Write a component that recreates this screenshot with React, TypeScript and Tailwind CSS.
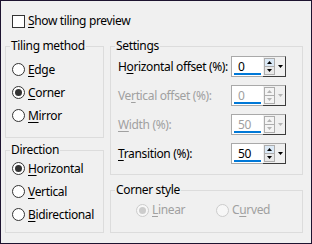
import React from "react";

function Mn({ children }: { children: React.ReactNode }) {
  return <span className="underline underline-offset-[2px] decoration-[1px]">{children}</span>;
}

function Radio({ checked, disabled, children }: { checked?: boolean; disabled?: boolean; children: React.ReactNode }) {
  return (
    <div className="flex items-center gap-[3px] whitespace-nowrap">
      <span
        className={`w-[13px] h-[13px] rounded-full border flex items-center justify-center shrink-0 ${
          disabled ? "border-[#cccccc] bg-[#f7f7f7]" : "border-[#333333] bg-white"
        }`}
      >
        {checked && <span className={`w-[7px] h-[7px] rounded-full ${disabled ? "bg-[#cccccc]" : "bg-[#333333]"}`} />}
      </span>
      <span className={disabled ? "text-[#a0a0a0]" : "text-black"}>{children}</span>
    </div>
  );
}

// legend sits at the fieldset's content edge, so padding goes on the inner box
function Group({ title, className, children }: { title: string; className: string; children: React.ReactNode }) {
  return (
    <fieldset className={`min-w-0 border border-[#dcdcdc] ${className}`}>
      <legend className="ml-[4px] px-[1px] leading-[14px] whitespace-nowrap">{title}</legend>
      {children}
    </fieldset>
  );
}

function Spin({ value, disabled }: { value: string; disabled?: boolean }) {
  const ink = disabled ? "#b4b4b4" : "#000000";
  return (
    <div className="flex h-[21px] w-[55px] shrink-0">
      <div className="relative w-[32px] h-full bg-white border border-[#a9a9a9] border-r-0">
        <span className={`absolute left-[6px] top-[2px] leading-[15px] ${disabled ? "text-[#a0a0a0]" : "text-black"}`}>{value}</span>
        <span className="absolute left-[2px] right-[2px] bottom-[1px] h-[2px] bg-[#0078d7]" />
      </div>
      <div className="flex items-center h-full border border-[#a9a9a9] border-l-0 border-r-[#3c3c3c] border-b-[#3c3c3c] bg-[#f0f0f0] pl-[1px]">
        <div className="flex flex-col w-[11px] h-[17px] border border-[#adadad]">
          <div className={`flex-1 flex items-center justify-center ${disabled ? "bg-[#f4f4f4]" : "bg-[#dbe9f6]"} border-b border-[#adadad]`}>
            <svg width="5" height="3" viewBox="0 0 5 3">
              <path d="M0 3 L2.5 0 L5 3 Z" fill={ink} />
            </svg>
          </div>
          <div className={`flex-1 flex items-center justify-center ${disabled ? "bg-[#f4f4f4]" : "bg-[#e8e8e8]"}`}>
            <svg width="5" height="3" viewBox="0 0 5 3">
              <path d="M0 0 L2.5 3 L5 0 Z" fill={ink} />
            </svg>
          </div>
        </div>
        <div className="w-[10px] flex items-center justify-center">
          <svg width="5" height="3" viewBox="0 0 5 3">
            <path d="M0 0 L2.5 3 L5 0 Z" fill={ink} />
          </svg>
        </div>
      </div>
    </div>
  );
}

function Row({ label, value, disabled }: { label: React.ReactNode; value: string; disabled?: boolean }) {
  return (
    <div className="flex items-center justify-between h-[21px]">
      <span className={`whitespace-nowrap ${disabled ? "text-[#a0a0a0]" : "text-black"}`}>{label}</span>
      <Spin value={value} disabled={disabled} />
    </div>
  );
}

export default function App() {
  return (
    <div className="w-[312px] h-[244px] bg-[#f0f0f0] border border-[#1d1330] font-['Noto_Sans',sans-serif] text-[12px] tracking-[-0.35px] leading-[14px] text-black overflow-hidden">
      <div className="flex items-center gap-[3px] pl-[11px] pt-[13px] h-[27px]">
        <span className="w-[13px] h-[13px] border border-[#333333] bg-white" />
        <span>
          <Mn>S</Mn>how tiling preview
        </span>
      </div>
      <div className="flex gap-[6px] pl-[4px] pt-[11px]">
        <div className="flex flex-col w-[99px] gap-[5px]">
          <Group title="Tiling method" className="h-[99px]">
            <div className="flex flex-col pl-[6px] pt-[5px]">
              <div className="h-[23px] flex items-center"><Radio><Mn>E</Mn>dge</Radio></div>
              <div className="h-[23px] flex items-center"><Radio checked><Mn>C</Mn>orner</Radio></div>
              <div className="h-[23px] flex items-center"><Radio><Mn>M</Mn>irror</Radio></div>
            </div>
          </Group>
          <Group title="Direction" className="h-[90px]">
            <div className="flex flex-col pl-[6px]">
              <div className="h-[23px] flex items-center"><Radio checked><Mn>H</Mn>orizontal</Radio></div>
              <div className="h-[23px] flex items-center"><Radio><Mn>V</Mn>ertical</Radio></div>
              <div className="h-[23px] flex items-center"><Radio><Mn>B</Mn>idirectional</Radio></div>
            </div>
          </Group>
        </div>
        <div className="flex flex-col w-[193px] gap-[8px]">
          <Group title="Settings" className="h-[136px]">
            <div className="flex flex-col gap-[8px] pl-[7px] pr-[16px] pt-[3px]">
              <Row label={<>H<Mn>o</Mn>rizontal offset (%):</>} value="0" />
              <Row label={<>Ve<Mn>r</Mn>tical offset (%):</>} value="0" disabled />
              <Row label={<><Mn>W</Mn>idth (%):</>} value="50" disabled />
              <Row label={<><Mn>T</Mn>ransition (%):</>} value="50" />
            </div>
          </Group>
          <Group title="Corner style" className="h-[50px]">
            <div className="flex items-center pl-[25px] pt-[6px]">
              <div className="w-[80px]"><Radio checked disabled><Mn>L</Mn>inear</Radio></div>
              <Radio disabled>C<Mn>u</Mn>rved</Radio>
            </div>
          </Group>
        </div>
      </div>
    </div>
  );
}
